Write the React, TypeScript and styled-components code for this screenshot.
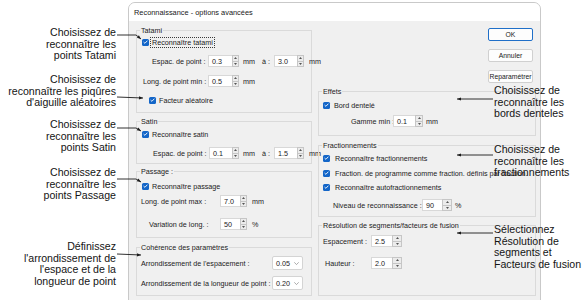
import React from "react";
import styled, { createGlobalStyle } from "styled-components";

const Global = createGlobalStyle`
  html, body { margin: 0; padding: 0; background: #ffffff; }
  body { font-family: "Liberation Sans", Arial, sans-serif; }
`;

const Page = styled.div`
  position: relative;
  width: 587px;
  height: 300px;
  box-sizing: border-box;
  padding: 2px 0 0 128px;
  overflow: hidden;
  background: #ffffff;
`;

const Dialog = styled.div`
  width: 413px;
  height: 310px;
  box-sizing: border-box;
  border: 1px solid #c9c9c9;
  border-radius: 7px 7px 0 0;
  background: #f0f0f0;
  overflow: hidden;
  display: flex;
  flex-direction: column;
  font-family: "Liberation Sans", Arial, sans-serif;
  font-size: 7.2px;
  color: #1b1b1b;
`;

const TitleBar = styled.div`
  height: 18px;
  flex: none;
  background: #ffffff;
  display: flex;
  align-items: center;
  padding-left: 5px;
  font-size: 7.4px;
  color: #202020;
`;

const Body = styled.div`
  display: flex;
  gap: 6px;
  padding-left: 7px;
`;

const Column = styled.div<{ $w: number; $pt: number }>`
  width: ${(p) => p.$w}px;
  flex: none;
  display: flex;
  flex-direction: column;
  padding-top: ${(p) => p.$pt}px;
`;

const Group = styled.fieldset<{ $mt: number; $pb: number }>`
  margin: ${(p) => p.$mt}px 0 0 0;
  padding: 0 0 ${(p) => p.$pb}px 0;
  border: 1px solid #dadada;
  min-width: 0;
  display: flex;
  flex-direction: column;
`;

const Legend = styled.legend`
  margin-left: 3px;
  padding: 0 1px;
  line-height: 9px;
  font-size: 7.2px;
  color: #1b1b1b;
`;

const Row = styled.div<{ $mt: number; $pl: number; $h?: number }>`
  display: flex;
  align-items: center;
  height: ${(p) => p.$h ?? 12}px;
  margin-top: ${(p) => p.$mt}px;
  padding-left: ${(p) => p.$pl}px;
  white-space: nowrap;
`;

const Label = styled.span<{ $w: number }>`
  width: ${(p) => p.$w}px;
  flex: none;
`;

const Unit = styled.span<{ $ml: number }>`
  margin-left: ${(p) => p.$ml}px;
  flex: none;
`;

const Box = styled.span`
  width: 7px;
  height: 7px;
  flex: none;
  border-radius: 1.5px;
  background: #1466c8;
  display: flex;
  align-items: center;
  justify-content: center;
`;

const CheckText = styled.span<{ $ml: number; $focus?: boolean }>`
  margin-left: ${(p) => p.$ml}px;
  padding: 0 1px;
  line-height: 9px;
  border: 1px dotted ${(p) => (p.$focus ? "#3a3a3a" : "transparent")};
`;

const SpinWrap = styled.div<{ $ml: number }>`
  display: flex;
  height: 12px;
  flex: none;
  margin-left: ${(p) => p.$ml}px;
`;

const SpinField = styled.div<{ $w: number }>`
  width: ${(p) => p.$w}px;
  box-sizing: border-box;
  background: #ffffff;
  border: 1px solid #d8d8d8;
  border-right: none;
  padding-left: 3px;
  display: flex;
  align-items: center;
`;

const SpinButtons = styled.div<{ $w: number }>`
  width: ${(p) => p.$w}px;
  box-sizing: border-box;
  border: 1px solid #c6c6c6;
  background: #ececec;
  display: flex;
  flex-direction: column;
`;

const SpinHalf = styled.div<{ $top?: boolean }>`
  flex: 1;
  display: flex;
  align-items: center;
  justify-content: center;
  border-top: ${(p) => (p.$top ? "none" : "1px solid #c6c6c6")};
`;

const Combo = styled.div<{ $ml: number }>`
  width: 31px;
  height: 14px;
  box-sizing: border-box;
  margin-left: ${(p) => p.$ml}px;
  background: #ffffff;
  border: 1px solid #d4d4d4;
  border-radius: 2px;
  display: flex;
  align-items: center;
  justify-content: space-between;
  padding: 0 3px 0 3px;
`;

const Buttons = styled.div`
  display: flex;
  flex-direction: column;
  align-items: flex-end;
  gap: 8px;
  padding-right: 3px;
`;

const Button = styled.div<{ $primary?: boolean }>`
  width: 45px;
  height: 13px;
  box-sizing: border-box;
  border: 1px solid ${(p) => (p.$primary ? "#1f6fc8" : "#d0d0d0")};
  border-radius: 2px;
  background: #fdfdfd;
  display: flex;
  align-items: center;
  justify-content: center;
  font-size: 6.8px;
  color: #1b1b1b;
`;

const Callout = styled.div<{ $top: number; $left?: number; $right?: number }>`
  position: absolute;
  top: ${(p) => p.$top}px;
  ${(p) => (p.$left !== undefined ? `left: ${p.$left}px;` : "")}
  ${(p) => (p.$right !== undefined ? `right: ${p.$right}px; text-align: right;` : "")}
  font-family: "Liberation Sans", Arial, sans-serif;
  font-size: 10.6px;
  line-height: 11.6px;
  color: #141414;
  white-space: nowrap;
`;

const Overlay = styled.svg`
  position: absolute;
  left: 0;
  top: 0;
  pointer-events: none;
`;

const Check = () => (
  <Box>
    <svg width="5" height="4" viewBox="0 0 5 4">
      <path d="M0.6 2.1 L1.9 3.3 L4.4 0.7" fill="none" stroke="#fff" strokeWidth="0.9" />
    </svg>
  </Box>
);

const Spin = ({ value, fw, bw, ml }: { value: string; fw: number; bw: number; ml: number }) => (
  <SpinWrap $ml={ml}>
    <SpinField $w={fw}>{value}</SpinField>
    <SpinButtons $w={bw}>
      <SpinHalf $top>
        <svg width="3" height="2" viewBox="0 0 3 2">
          <path d="M0 2 L1.5 0 L3 2 Z" fill="#555" />
        </svg>
      </SpinHalf>
      <SpinHalf>
        <svg width="3" height="2" viewBox="0 0 3 2">
          <path d="M0 0 L1.5 2 L3 0 Z" fill="#555" />
        </svg>
      </SpinHalf>
    </SpinButtons>
  </SpinWrap>
);

const Chevron = () => (
  <svg width="5" height="3" viewBox="0 0 5 3">
    <path d="M0.3 0.3 L2.5 2.6 L4.7 0.3" fill="none" stroke="#8a8a8a" strokeWidth="0.7" />
  </svg>
);

type Arrow = { pts: [number, number][]; dir: "r" | "l" };

const arrows: Arrow[] = [
  { pts: [[117, 35], [136, 35], [141, 39]], dir: "r" },
  { pts: [[117, 97], [143, 98]], dir: "r" },
  { pts: [[117, 128], [136, 128], [141, 131]], dir: "r" },
  { pts: [[117, 179], [136, 179], [141, 182]], dir: "r" },
  { pts: [[117, 254], [141, 255]], dir: "r" },
  { pts: [[493, 99], [457, 99]], dir: "l" },
  { pts: [[493, 155], [457, 155]], dir: "l" },
  { pts: [[493, 233], [457, 233]], dir: "l" },
];

const head = (a: Arrow) => {
  const n = a.pts.length;
  const [x2, y2] = a.pts[n - 1];
  const [x1, y1] = a.pts[n - 2];
  const ang = Math.atan2(y2 - y1, x2 - x1);
  const len = 4;
  const w = 1.6;
  const bx = x2 - len * Math.cos(ang);
  const by = y2 - len * Math.sin(ang);
  const px = -Math.sin(ang) * w;
  const py = Math.cos(ang) * w;
  return `M${x2} ${y2} L${bx + px} ${by + py} L${bx - px} ${by - py} Z`;
};

export default function App() {
  return (
    <>
      <Global />
      <Page>
        <Dialog>
          <TitleBar>Reconnaissance - options avancées</TitleBar>
          <Body>
            <Column $w={176} $pt={5}>
              <Group $mt={0} $pb={6}>
                <Legend>Tatami</Legend>
                <Row $mt={1} $pl={5}>
                  <Check />
                  <CheckText $ml={1} $focus>Reconnaître tatami</CheckText>
                </Row>
                <Row $mt={7} $pl={15}>
                  <Label $w={56}>Espac. de point :</Label>
                  <Spin value="0.3" fw={24} bw={7} ml={0} />
                  <Unit $ml={4}>mm</Unit>
                  <Unit $ml={7}>à :</Unit>
                  <Spin value="3.0" fw={23} bw={7} ml={4} />
                  <Unit $ml={5}>mm</Unit>
                </Row>
                <Row $mt={8} $pl={6}>
                  <Label $w={65}>Long. de point min :</Label>
                  <Spin value="0.5" fw={24} bw={7} ml={0} />
                  <Unit $ml={4}>mm</Unit>
                </Row>
                <Row $mt={7} $pl={12}>
                  <Check />
                  <CheckText $ml={1}>Facteur aléatoire</CheckText>
                </Row>
              </Group>

              <Group $mt={4} $pb={4}>
                <Legend>Satin</Legend>
                <Row $mt={2} $pl={5}>
                  <Check />
                  <CheckText $ml={1}>Reconnaître satin</CheckText>
                </Row>
                <Row $mt={7} $pl={16}>
                  <Label $w={56}>Espac. de point :</Label>
                  <Spin value="0.1" fw={23} bw={7} ml={0} />
                  <Unit $ml={4}>mm</Unit>
                  <Unit $ml={7}>à :</Unit>
                  <Spin value="1.5" fw={23} bw={7} ml={4} />
                  <Unit $ml={5}>mm</Unit>
                </Row>
              </Group>

              <Group $mt={3} $pb={7}>
                <Legend>Passage :</Legend>
                <Row $mt={4} $pl={5}>
                  <Check />
                  <CheckText $ml={1}>Reconnaître passage</CheckText>
                </Row>
                <Row $mt={3} $pl={4}>
                  <Label $w={79}>Long. de point max :</Label>
                  <Spin value="7.0" fw={20} bw={7} ml={0} />
                  <Unit $ml={5}>mm</Unit>
                </Row>
                <Row $mt={11} $pl={12}>
                  <Label $w={71}>Variation de long. :</Label>
                  <Spin value="50" fw={20} bw={7} ml={0} />
                  <Unit $ml={5}>%</Unit>
                </Row>
              </Group>

              <Group $mt={5} $pb={5}>
                <Legend>Cohérence des paramètres</Legend>
                <Row $mt={4} $pl={4} $h={14}>
                  <Label $w={131}>Arrondissement de l'espacement :</Label>
                  <Combo $ml={0}>
                    <span>0.05</span>
                    <Chevron />
                  </Combo>
                </Row>
                <Row $mt={6} $pl={4} $h={14}>
                  <Label $w={131}>Arrondissement de la longueur de point :</Label>
                  <Combo $ml={0}>
                    <span>0.20</span>
                    <Chevron />
                  </Combo>
                </Row>
              </Group>
            </Column>

            <Column $w={218} $pt={7}>
              <Buttons>
                <Button $primary>OK</Button>
                <Button>Annuler</Button>
                <Button>Reparamétrer</Button>
              </Buttons>

              <Group $mt={4} $pb={8}>
                <Legend>Effets</Legend>
                <Row $mt={3} $pl={4}>
                  <Check />
                  <CheckText $ml={2}>Bord dentelé</CheckText>
                </Row>
                <Row $mt={4} $pl={32}>
                  <Label $w={42}>Gamme min :</Label>
                  <Spin value="0.1" fw={22} bw={8} ml={0} />
                  <Unit $ml={3}>mm</Unit>
                </Row>
              </Group>

              <Group $mt={5} $pb={5}>
                <Legend>Fractionnements</Legend>
                <Row $mt={2} $pl={4}>
                  <Check />
                  <CheckText $ml={3}>Reconnaître fractionnements</CheckText>
                </Row>
                <Row $mt={3} $pl={4}>
                  <Check />
                  <CheckText $ml={3}>
                    Fraction. de programme comme fraction. définis par fraction.
                  </CheckText>
                </Row>
                <Row $mt={2} $pl={4}>
                  <Check />
                  <CheckText $ml={3}>Reconnaître autofractionnements</CheckText>
                </Row>
                <Row $mt={6} $pl={14}>
                  <Label $w={89}>Niveau de reconnaissance :</Label>
                  <Spin value="90" fw={20} bw={10} ml={0} />
                  <Unit $ml={3}>%</Unit>
                </Row>
              </Group>

              <Group $mt={4} $pb={26}>
                <Legend>Résolution de segments/facteurs de fusion</Legend>
                <Row $mt={5} $pl={4}>
                  <Label $w={48}>Espacement :</Label>
                  <Spin value="2.5" fw={21} bw={10} ml={0} />
                </Row>
                <Row $mt={10} $pl={6}>
                  <Label $w={46}>Hauteur :</Label>
                  <Spin value="2.0" fw={21} bw={10} ml={0} />
                </Row>
              </Group>
            </Column>
          </Body>
        </Dialog>

        <Callout $top={27} $right={471}>
          Choisissez de
          <br />
          reconnaître les
          <br />
          points Tatami
        </Callout>
        <Callout $top={74} $right={471}>
          Choisissez de
          <br />
          reconnaître les piqûres
          <br />
          d'aiguille aléatoires
        </Callout>
        <Callout $top={119} $right={471}>
          Choisissez de
          <br />
          reconnaître les
          <br />
          points Satin
        </Callout>
        <Callout $top={167} $right={471}>
          Choisissez de
          <br />
          reconnaître les
          <br />
          points Passage
        </Callout>
        <Callout $top={241} $right={471}>
          Définissez
          <br />
          l'arrondissement de
          <br />
          l'espace et de la
          <br />
          longueur de point
        </Callout>
        <Callout $top={85} $left={494}>
          Choisissez de
          <br />
          reconnaître les
          <br />
          bords denteles
        </Callout>
        <Callout $top={144} $left={494}>
          Choisissez de
          <br />
          reconnaître les
          <br />
          fractionnements
        </Callout>
        <Callout $top={224} $left={494}>
          Sélectionnez
          <br />
          Résolution de
          <br />
          segments et
          <br />
          Facteurs de fusion
        </Callout>

        <Overlay width="587" height="300" viewBox="0 0 587 300">
          {arrows.map((a, i) => (
            <g key={i}>
              <polyline
                points={a.pts.map((p) => p.join(",")).join(" ")}
                fill="none"
                stroke="#1a1a1a"
                strokeWidth="0.9"
              />
              <path d={head(a)} fill="#1a1a1a" />
            </g>
          ))}
        </Overlay>
      </Page>
    </>
  );
}
